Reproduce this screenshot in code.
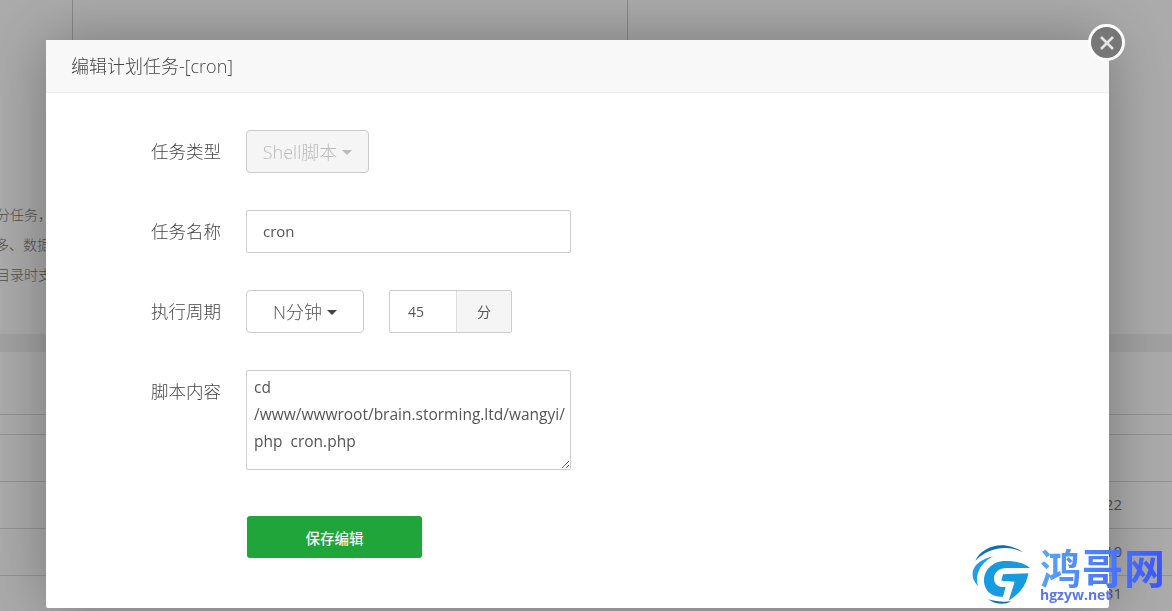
<script>
  const rows = [
    { h: 45, t: '22' },
    { h: 49, t: '10' },
    { h: 36, t: '31' }
  ];
</script>

<div class="page">
  <div class="top">
    <div class="cols"><span class="c1"></span><span class="c2"></span></div>
    <div class="intro">
      <p class="l1">分任务，</p>
      <p class="l2">多、数据</p>
      <p class="l3">目录时支</p>
    </div>
  </div>
  <div class="band"></div>
  <div class="row r1"></div>
  <div class="row r2"></div>
  <div class="row r3"></div>
  <div class="row data d1"><span>22</span></div>
  <div class="row data d2"><span>10</span></div>
  <div class="row data d3"><span>31</span></div>
</div>

<div class="overlay"></div>

<section class="modal">
  <header>编辑计划任务-[cron]</header>
  <form onsubmit={(e) => e.preventDefault()}>
    <label class="lab" for="t">任务类型</label>
    <div class="ctl"><button id="t" type="button" class="sel dis w123" disabled>Shell脚本<i class="caret"></i></button></div>

    <label class="lab" for="n">任务名称</label>
    <div class="ctl"><input id="n" class="txt w325" value="cron" /></div>

    <label class="lab" for="p">执行周期</label>
    <div class="ctl">
      <button id="p" type="button" class="sel w118">N分钟<i class="caret dark"></i></button>
      <div class="group">
        <input class="num" value="45" aria-label="分" />
        <span class="addon">分</span>
      </div>
    </div>

    <label class="lab" for="s">脚本内容</label>
    <div class="ctl"><textarea id="s" class="area" value={"cd /www/wwwroot/brain.storming.ltd/wangyi/ php  cron.php"}></textarea></div>

    <div></div>
    <div class="ctl save-row"><button type="submit" class="save">保存编辑</button></div>
  </form>
</section>

<button class="close" aria-label="关闭">
  <svg viewBox="0 0 20 20" width="20" height="20"><path d="M4 4 16 16M16 4 4 16" stroke="#e4e4e4" stroke-width="2.6" fill="none"/></svg>
</button>

<div class="mark">
  <svg class="g" viewBox="0 0 210 213" width="70" height="71" aria-hidden="true">
    <path d="M22 62C40 22 105-5 165 37 120 15 65 20 22 62Z" fill="#0f6fb3"/>
    <path d="M30 138C0 105 10 65 76 48 35 70 20 105 30 138Z" fill="#1f9fe2"/>
    <path d="M186 84C170 68 130 60 100 64 65 70 46 98 48 125 50 155 75 172 105 170L113 140C95 145 78 135 78 115 78 95 95 84 115 84Z" fill="#169ae0"/>
    <path d="M105 103 181 100C175 140 150 165 122 182L140 125 100 122Z" fill="#169ae0"/>
    <path d="M60 178C85 195 110 195 130 184 108 186 85 186 60 178Z" fill="#0f6fb3"/>
  </svg>
  <div class="brand">
    <div class="cn">鸿哥网</div>
    <div class="url">hgzyw.net</div>
  </div>
</div>

<style>
  :global(body) {
    margin: 0;
    background: #fff;
    overflow: hidden;
    font-family: "Open Sans", "Noto Sans CJK SC", sans-serif;
    color: #555;
  }
  .page { height: 611px; overflow: hidden; }
  .top { height: 334px; position: relative; }
  .cols { height: 40px; display: flex; }
  .cols span { display: block; border-right: 1px solid #ccc; height: 40px; }
  .c1 { width: 72px; }
  .c2 { width: 554px; }
  .intro { margin-top: 160px; width: 46px; overflow: hidden; font-size: 14px; font-weight: 300; color: #777; }
  .intro p { margin: 0; height: 30px; line-height: 30px; white-space: nowrap; }
  .l1 { margin-left: -4px !important; }
  .l2 { margin-left: -5px !important; }
  .l3 { margin-left: -4px !important; }
  .band { height: 18px; background: #f0f0f0; }
  .row { border-bottom: 1px solid #ddd; box-sizing: border-box; }
  .r1 { height: 63px; }
  .r2 { height: 20px; }
  .r3 { height: 47px; }
  .data { display: flex; align-items: center; justify-content: flex-end; padding-right: 50px; padding-bottom: 2px; font-size: 15px; color: #777; }
  .d1, .d2 { height: 47px; }
  .d3 { height: 36px; }

  .overlay { position: fixed; inset: 0; background: rgba(0,0,0,.33); }

  .modal {
    position: absolute; left: 46px; top: 40px; width: 1063px; height: 568px;
    background: #fff; border-radius: 2px;
    box-shadow: 0 0 60px rgba(0,0,0,.3);
  }
  header {
    height: 52px; line-height: 52px; padding-left: 25px;
    background: #f8f8f8; border-bottom: 1px solid #eee;
    font-size: 18px; color: #444; font-weight: 300;
  }
  form {
    display: grid; grid-template-columns: 175px 1fr; column-gap: 25px;
    row-gap: 37px; padding-top: 37px;
  }
  .lab { text-align: right; font-size: 17.5px; line-height: 43px; font-weight: 300; color: #444; }
  .ctl { display: flex; align-items: flex-start; }
  .sel {
    height: 43px; box-sizing: border-box; background: #fff; border: 1px solid #ccc; border-radius: 4px;
    font: 300 18px "Open Sans", "Noto Sans CJK SC", sans-serif; color: #555;
    display: flex; align-items: center; justify-content: center; padding: 0 0 2px;
  }
  .w123 { width: 123px; }
  .w118 { width: 118px; }
  .dis { background: #f5f5f5; color: #bbb; }
  .caret { width: 0; height: 0; margin-left: 5px; margin-top: 4px; border: 5px solid transparent; border-bottom: 0; border-top-color: #bbb; }
  .caret.dark { border-top-color: #444; }
  .txt {
    height: 43px; box-sizing: border-box; border: 1px solid #ccc; border-radius: 2px;
    padding: 0 15px 2px 16px; font: 15px "Open Sans", sans-serif; color: #555; outline: none;
  }
  .w325 { width: 325px; }
  .group { display: flex; margin-left: 25px; height: 43px; border: 1px solid #ccc; border-radius: 2px; box-sizing: border-box; }
  .num { width: 67px; box-sizing: border-box; border: 0; border-right: 1px solid #ddd; padding: 0 0 0 18px; font: 14px "Open Sans", sans-serif; color: #555; outline: none; }
  .addon { width: 54px; background: #f5f5f5; text-align: center; font-size: 14px; line-height: 41px; color: #555; }
  .area {
    width: 325px; height: 100px; box-sizing: border-box; border: 1px solid #ccc; border-radius: 2px;
    padding: 3px 0 3px 7px; font: 15.5px/27px "Open Sans", sans-serif; color: #555; outline: none; display: block;
  }
  .save-row { margin-top: 9px; padding-left: 1px; }
  .save {
    width: 175px; height: 42px; background: #20a53a; color: #f4f4f4; border: 0; border-radius: 3px;
    font: 500 14.5px "Noto Sans CJK SC", sans-serif; padding: 0;
  }

  .close {
    position: absolute; left: 1088px; top: 24px; width: 37px; height: 37px; box-sizing: border-box;
    border-radius: 50%; border: 3px solid #fff; background: #777; padding: 0;
    display: flex; align-items: center; justify-content: center;
  }

  .mark { position: absolute; left: 968px; top: 540px; display: flex; gap: 2px; }
  .g { display: block; }
  .cn {
    font: 700 41px/46px "Noto Sans CJK SC", sans-serif; letter-spacing: 1px; white-space: nowrap; margin-top: 3px;
    background: linear-gradient(100deg, #5aa8f5, #3a50ff);
    -webkit-background-clip: text; background-clip: text; color: transparent;
  }
  .url { font: 700 14px/14px "Open Sans", sans-serif; color: #5a78ea; margin-top: -1px; }
</style>
